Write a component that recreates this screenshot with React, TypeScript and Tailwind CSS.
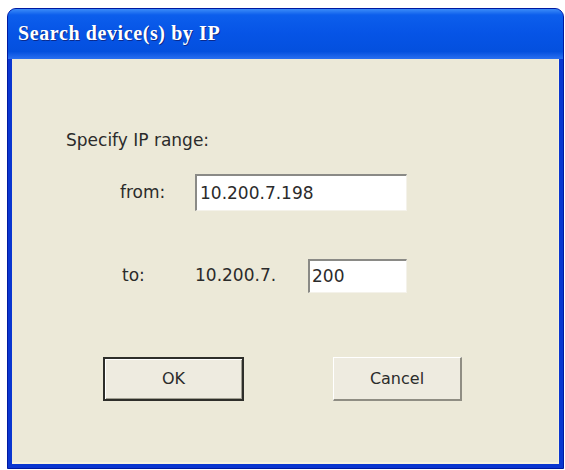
export default function App() {
  return (
    <div className="w-[565px] h-[470px] bg-white pt-[8px] pl-[7px] overflow-hidden">
      <div className="w-[557px] h-[461px] flex flex-col rounded-t-[9px] bg-[#0A36D0] border border-[#0019A0] overflow-hidden">
        {/* Title bar */}
        <div className="h-[50px] shrink-0 flex items-center pl-[10px] bg-[linear-gradient(180deg,#3C8CF8_0%,#0C5EEC_12%,#0654E6_50%,#0450DE_85%,#2A6FF0_100%)]">
          <span className="text-white font-bold text-[20px] tracking-[0.6px] font-['Liberation_Serif',serif] [text-shadow:1px_1px_0_#0B2A8C] -mt-[3px]">
            Search device(s) by IP
          </span>
        </div>

        {/* Client area */}
        <div className="flex-1 mx-[4px] mb-[4px] bg-[#ECE9D8] border-b-2 border-r border-[#F5F1DE] text-[#2B2B2B] font-['DejaVu_Sans',sans-serif] text-[17px]">
          <div className="pl-[54px] pt-[71px] leading-[20px]">Specify IP range:</div>

          <div className="flex items-center mt-[24px]">
            <span className="w-[75px] ml-[108px]">from:</span>
            <div className="w-[212px] h-[37px] bg-white border-t-2 border-l-2 border-t-[#8A8A86] border-l-[#8A8A86] border-r border-b border-r-[#F4F2EA] border-b-[#F4F2EA] flex items-center pl-[3px] leading-none">
              10.200.7.198
            </div>
          </div>

          <div className="flex items-center mt-[48px]">
            <span className="w-[73px] ml-[110px]">to:</span>
            <span className="w-[113px]">10.200.7.</span>
            <div className="w-[99px] h-[34px] bg-white border-t-2 border-l-2 border-t-[#8A8A86] border-l-[#8A8A86] border-r border-b border-r-[#F4F2EA] border-b-[#F4F2EA] flex items-center pl-[2px] leading-none">
              200
            </div>
          </div>

          <div className="flex mt-[64px] pl-[91px] gap-[89px]">
            <button className="w-[141px] h-[44px] bg-[#EEEBE0] border-2 border-[#2E2E2A] shadow-[inset_1px_1px_0_#FFFFFF,inset_-1px_-1px_0_#A09E92] text-[16px] font-['DejaVu_Sans',sans-serif] text-[#2B2B2B]">
              OK
            </button>
            <button className="w-[129px] h-[44px] bg-[#EEEBE0] border-t border-l border-[#FFFFFF] border-r-2 border-b-2 border-r-[#8F8D83] border-b-[#8F8D83] text-[16px] font-['DejaVu_Sans',sans-serif] text-[#2B2B2B]">
              Cancel
            </button>
          </div>
        </div>
      </div>
    </div>
  );
}
